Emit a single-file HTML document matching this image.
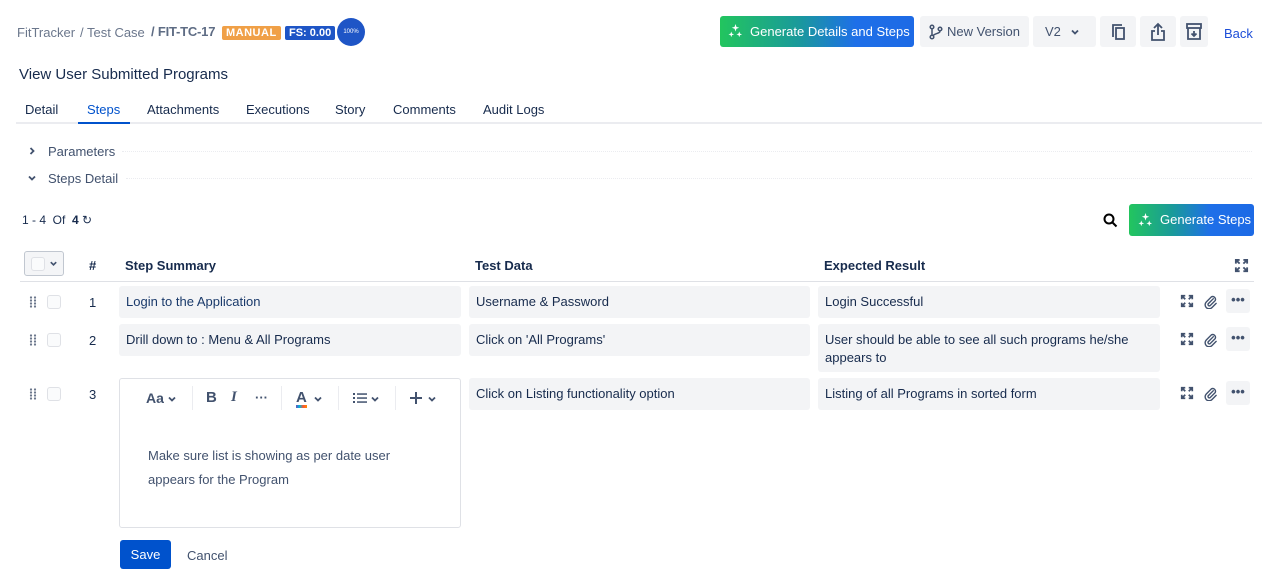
<!DOCTYPE html>
<html><head><meta charset="utf-8"><style>
*{box-sizing:border-box;margin:0;padding:0}
body{width:1270px;height:576px;background:#fff;font-family:"Liberation Sans",sans-serif;color:#172b4d;font-size:13px;position:relative;overflow:hidden}
.a{position:absolute;white-space:nowrap}
.cell{position:absolute;background:#f3f4f6;border-radius:3px;padding:7px 7px;line-height:18px;white-space:normal}
.btn{position:absolute;background:#f3f4f6;border-radius:3px}
.chk{position:absolute;width:14px;height:14px;border:1.5px solid #dfe1e6;border-radius:3px;background:#fafbfc}
.grip{position:absolute;width:8px;height:12px;background:radial-gradient(circle,#6b778c 1px,transparent 1.3px) 0 0/4px 3px}
.tab{position:absolute;top:102px;font-size:13px}
</style></head><body>
<svg width="0" height="0" style="position:absolute"><defs>
<symbol id="exp" viewBox="0 0 16 16"><g fill="none" stroke="#42526e" stroke-width="2"><path d="M2 6V2h4M2 2l4 4M14 6V2h-4M14 2l-4 4M2 10v4h4M2 14l4-4M14 10v4h-4M14 14l-4-4"/></g></symbol>
<symbol id="clip" viewBox="0 0 16 16"><path d="M11 5l-5.5 5.5a1.5 1.5 0 0 0 2 2L13 7a3 3 0 0 0-4-4L3.5 8.5a4.2 4.2 0 0 0 6 6L14 10" fill="none" stroke="#42526e" stroke-width="1.5" stroke-linecap="round"/></symbol>
<symbol id="chev" viewBox="0 0 10 10"><path d="M2 3.5l3 3 3-3" fill="none" stroke="#42526e" stroke-width="1.8"/></symbol>
<symbol id="spark" viewBox="0 0 16 16" fill="#fff"><path d="M8 0l1 3 3 1-3 1-1 3-1-3-3-1 3-1z"/><path d="M3.5 8l.8 2.2 2.2.8-2.2.8-.8 2.2-.8-2.2L.5 11l2.2-.8z"/><path d="M12 8l.8 2.2 2.2.8-2.2.8-.8 2.2-.8-2.2-2.2-.8 2.2-.8z"/></symbol>
</defs></svg>
<div class="a" style="left:17px;top:25px;color:#6b778c">FitTracker</div>
<div class="a" style="left:80px;top:25px;color:#6b778c">/ Test Case</div>
<div class="a" style="left:151px;top:24px;color:#5e6c84;font-weight:bold;font-size:13px;letter-spacing:-0.2px">/ FIT-TC-17</div>
<div class="a" style="left:222px;top:26px;background:#f0a047;color:#fff;font-weight:bold;font-size:11px;padding:1px 4px;border-radius:2px;letter-spacing:.5px">MANUAL</div>
<div class="a" style="left:285px;top:26px;background:#1e55c6;color:#fff;font-weight:bold;font-size:11px;padding:1px 4px;border-radius:2px">FS: 0.00</div>
<div class="a" style="left:337px;top:18px;width:28px;height:28px;border-radius:50%;background:#1e55c6;color:#fff;font-size:6px;text-align:center;line-height:28px">100%</div>

<div class="a" style="left:720px;top:16px;width:194px;height:31px;border-radius:3px;background:linear-gradient(90deg,#22c55e,#1a9a9a 40%,#1e6fe8 70%,#1d6ae5);color:#fff;font-size:13px;line-height:31px;padding-left:30px">Generate Details and Steps</div>
<svg class="a" style="left:728px;top:24px" width="15" height="15"><use href="#spark"/></svg>
<div class="btn" style="left:920px;top:16px;width:109px;height:31px;line-height:31px;padding-left:27px;color:#42526e">New Version</div>
<svg class="a" style="left:929px;top:24px" width="14" height="16" viewBox="0 0 14 16" fill="none" stroke="#42526e" stroke-width="1.5"><circle cx="3" cy="3" r="1.8"/><circle cx="3" cy="13" r="1.8"/><circle cx="11" cy="5" r="1.8"/><path d="M3 5v6M11 7c0 3-6 2-7 5"/></svg>
<div class="btn" style="left:1033px;top:16px;width:63px;height:31px;line-height:31px;padding-left:12px;color:#42526e">V2</div>
<svg class="a" style="left:1070px;top:27px" width="10" height="10"><use href="#chev"/></svg>
<div class="btn" style="left:1100px;top:16px;width:36px;height:31px"></div>
<svg class="a" style="left:1110px;top:23px" width="16" height="18" viewBox="0 0 16 18" fill="none" stroke="#42526e" stroke-width="1.8"><path d="M3 14V2h9"/><rect x="6" y="5" width="8" height="11"/></svg>
<div class="btn" style="left:1140px;top:16px;width:36px;height:31px"></div>
<svg class="a" style="left:1150px;top:22px" width="16" height="20" viewBox="0 0 16 20" fill="none" stroke="#42526e" stroke-width="1.8"><path d="M8 13V2M4 6l4-4 4 4M5 9H2v9h12V9h-3"/></svg>
<div class="btn" style="left:1180px;top:16px;width:28px;height:31px"></div>
<svg class="a" style="left:1186px;top:23px" width="16" height="17" viewBox="0 0 16 17" fill="none" stroke="#42526e" stroke-width="1.8"><rect x="1" y="1" width="14" height="4"/><path d="M2 5v11h12V5M8 8v5M5.5 10.5L8 13l2.5-2.5"/></svg>
<div class="a" style="left:1224px;top:26px;color:#1d4ed8">Back</div>

<div class="a" style="left:19px;top:66px;font-size:15px">View User Submitted Programs</div>
<div class="tab" style="left:25px">Detail</div>
<div class="tab" style="left:87px;color:#0052cc">Steps</div>
<div class="tab" style="left:147px">Attachments</div>
<div class="tab" style="left:246px">Executions</div>
<div class="tab" style="left:335px">Story</div>
<div class="tab" style="left:393px">Comments</div>
<div class="tab" style="left:483px">Audit Logs</div>
<div class="a" style="left:16px;top:122px;width:1246px;height:2px;background:#ebecf0"></div>
<div class="a" style="left:78px;top:122px;width:52px;height:2px;background:#0052cc"></div>

<svg class="a" style="left:27px;top:146px;transform:rotate(-90deg)" width="10" height="10"><use href="#chev"/></svg>
<div class="a" style="left:48px;top:144px;color:#42526e">Parameters</div>
<div class="a" style="left:122px;top:151px;width:1130px;border-top:1px dotted #ebecf0"></div>
<svg class="a" style="left:27px;top:173px" width="10" height="10"><use href="#chev"/></svg>
<div class="a" style="left:48px;top:171px;color:#42526e">Steps Detail</div>
<div class="a" style="left:126px;top:178px;width:1126px;border-top:1px dotted #ebecf0"></div>

<div class="a" style="left:22px;top:213px;font-size:12px">1 - 4 &nbsp;Of &nbsp;<b>4</b> ↻</div>
<svg class="a" style="left:1103px;top:213px" width="15" height="15" viewBox="0 0 15 15" fill="none" stroke="#000" stroke-width="2"><circle cx="6" cy="6" r="4.5"/><path d="M9.5 9.5l4 4"/></svg>
<div class="a" style="left:1129px;top:204px;width:125px;height:32px;border-radius:3px;background:linear-gradient(90deg,#22c55e,#1a9a9a 35%,#1e6fe8 65%,#1d6ae5);color:#fff;line-height:32px;padding-left:31px">Generate Steps</div>
<svg class="a" style="left:1138px;top:213px" width="15" height="15"><use href="#spark"/></svg>

<div class="a" style="left:24px;top:251px;width:40px;height:25px;border:1px solid #c1c7d0;border-radius:3px;background:#f4f5f7"></div>
<div class="chk" style="left:31px;top:257px"></div>
<svg class="a" style="left:49px;top:259px" width="9" height="9"><use href="#chev"/></svg>
<div class="a" style="left:89px;top:258px;font-weight:bold">#</div>
<div class="a" style="left:125px;top:258px;font-weight:bold">Step Summary</div>
<div class="a" style="left:475px;top:258px;font-weight:bold">Test Data</div>
<div class="a" style="left:824px;top:258px;font-weight:bold">Expected Result</div>
<svg class="a" style="left:1234px;top:258px" width="15" height="15"><use href="#exp"/></svg>
<div class="a" style="left:20px;top:281px;width:1234px;height:1px;background:#dfe1e6"></div>

<div class="grip" style="left:29px;top:296px"></div><div class="chk" style="left:47px;top:295px"></div>
<div class="a" style="left:89px;top:295px">1</div>
<div class="cell" style="left:119px;top:286px;width:342px;height:32px;color:#1a3a6b">Login to the Application</div>
<div class="cell" style="left:469px;top:286px;width:341px;height:32px">Username &amp; Password</div>
<div class="cell" style="left:818px;top:286px;width:342px;height:32px">Login Successful</div>

<div class="grip" style="left:29px;top:334px"></div><div class="chk" style="left:47px;top:333px"></div>
<div class="a" style="left:89px;top:333px">2</div>
<div class="cell" style="left:119px;top:324px;width:342px;height:32px">Drill down to : Menu &amp; All Programs</div>
<div class="cell" style="left:469px;top:324px;width:341px;height:32px">Click on 'All Programs'</div>
<div class="cell" style="left:818px;top:324px;width:342px;height:48px">User should be able to see all such programs he/she appears to</div>

<div class="grip" style="left:29px;top:388px"></div><div class="chk" style="left:47px;top:387px"></div>
<div class="a" style="left:89px;top:387px">3</div>
<div class="a" style="left:119px;top:378px;width:342px;height:150px;border:1px solid #dfe1e6;border-radius:3px"></div>
<div class="a" style="left:146px;top:390px;font-size:14px;font-weight:bold;color:#42526e">Aa</div>
<svg class="a" style="left:167px;top:394px" width="10" height="10"><use href="#chev"/></svg>
<div class="a" style="left:192px;top:386px;width:1px;height:24px;background:#ebecf0"></div>
<div class="a" style="left:206px;top:389px;font-size:15px;font-weight:bold;color:#42526e">B</div>
<div class="a" style="left:231px;top:389px;font-size:15px;font-style:italic;font-weight:bold;color:#42526e;font-family:'Liberation Serif',serif">I</div>
<div class="a" style="left:255px;top:390px;font-weight:bold;color:#42526e">···</div>
<div class="a" style="left:281px;top:386px;width:1px;height:24px;background:#ebecf0"></div>
<div class="a" style="left:296px;top:389px;font-size:15px;font-weight:bold;color:#42526e">A</div>
<div class="a" style="left:296px;top:405px;width:11px;height:3px;background:linear-gradient(90deg,#6554c0,#00b8d9,#ff5630,#ff8b00)"></div>
<svg class="a" style="left:313px;top:394px" width="10" height="10"><use href="#chev"/></svg>
<div class="a" style="left:338px;top:386px;width:1px;height:24px;background:#ebecf0"></div>
<svg class="a" style="left:353px;top:392px" width="14" height="12" viewBox="0 0 14 12" fill="#42526e"><rect x="0" y="1" width="2" height="2"/><rect x="4" y="1.3" width="10" height="1.5"/><rect x="0" y="5" width="2" height="2"/><rect x="4" y="5.3" width="10" height="1.5"/><rect x="0" y="9" width="2" height="2"/><rect x="4" y="9.3" width="10" height="1.5"/></svg>
<svg class="a" style="left:370px;top:394px" width="10" height="10"><use href="#chev"/></svg>
<div class="a" style="left:395px;top:386px;width:1px;height:24px;background:#ebecf0"></div>
<svg class="a" style="left:409px;top:391px" width="14" height="14" viewBox="0 0 14 14"><path d="M7 1v12M1 7h12" stroke="#42526e" stroke-width="2"/></svg>
<svg class="a" style="left:427px;top:394px" width="10" height="10"><use href="#chev"/></svg>
<div class="a" style="left:148px;top:444px;line-height:24px;color:#42526e">Make sure list is showing as per date user<br>appears for the Program</div>
<div class="cell" style="left:469px;top:378px;width:341px;height:32px">Click on Listing functionality option</div>
<div class="cell" style="left:818px;top:378px;width:342px;height:32px">Listing of all Programs in sorted form</div>

<div class="a" style="left:120px;top:540px;width:51px;height:29px;background:#0052cc;border-radius:3px;color:#fff;text-align:center;line-height:29px">Save</div>
<div class="a" style="left:187px;top:548px;color:#42526e">Cancel</div>

<svg class="a" style="left:1180px;top:294px" width="14" height="14"><use href="#exp"/></svg>
<svg class="a" style="left:1203px;top:294px" width="15" height="15"><use href="#clip"/></svg>
<div class="btn" style="left:1226px;top:289px;width:24px;height:24px;text-align:center;font-weight:bold;line-height:22px;color:#42526e">•••</div>
<svg class="a" style="left:1180px;top:332px" width="14" height="14"><use href="#exp"/></svg>
<svg class="a" style="left:1203px;top:332px" width="15" height="15"><use href="#clip"/></svg>
<div class="btn" style="left:1226px;top:327px;width:24px;height:24px;text-align:center;font-weight:bold;line-height:22px;color:#42526e">•••</div>
<svg class="a" style="left:1180px;top:386px" width="14" height="14"><use href="#exp"/></svg>
<svg class="a" style="left:1203px;top:386px" width="15" height="15"><use href="#clip"/></svg>
<div class="btn" style="left:1226px;top:381px;width:24px;height:24px;text-align:center;font-weight:bold;line-height:22px;color:#42526e">•••</div>
</body></html>
